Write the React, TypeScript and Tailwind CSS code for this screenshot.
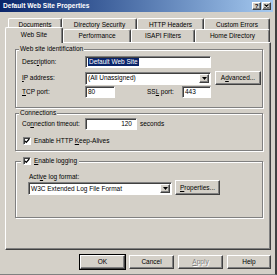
import React from "react";

const sunken =
  "bg-white border border-[#808080] border-r-white border-b-white shadow-[inset_1px_1px_0_#404040]";
const raised =
  "bg-[#d4d0c8] border border-white border-r-[#404040] border-b-[#404040] shadow-[inset_-1px_-1px_0_#808080]";
const etched = "border border-[#808080] shadow-[inset_1px_1px_0_#fff,1px_1px_0_#fff]";

function Check() {
  return (
    <div className={`w-[8px] h-[8px] flex items-center justify-center ${sunken}`}>
      <svg width="6" height="6" viewBox="0 0 6 6">
        <path d="M0.8 2.8 L2.3 4.4 L5.2 1" fill="none" stroke="#000" strokeWidth="1.2" />
      </svg>
    </div>
  );
}

function DropArrow() {
  return (
    <div className={`w-[10px] h-full flex items-center justify-center ${raised}`}>
      <svg width="5" height="3" viewBox="0 0 5 3">
        <path d="M0 0 H5 L2.5 3 Z" fill="#000" />
      </svg>
    </div>
  );
}

function Btn({ children, w, def, disabled }: { children: React.ReactNode; w: number; def?: boolean; disabled?: boolean }) {
  return (
    <div
      className={`h-[14px] flex items-center justify-center ${raised} ${def ? "outline outline-1 outline-black" : ""} ${
        disabled ? "text-[#808080] [text-shadow:1px_1px_0_#fff]" : ""
      }`}
      style={{ width: w }}
    >
      {children}
    </div>
  );
}

function Tab({ label, w, selected }: { label: string; w: number; selected?: boolean }) {
  return (
    <div
      className={`flex items-center justify-center rounded-t-[2px] border border-b-0 border-white border-r-[#404040] shadow-[inset_-1px_0_0_#808080] bg-[#d4d0c8] ${
        selected ? "h-[16px] -mb-[1px] relative z-10 pb-[2px]" : "h-[13px]"
      }`}
      style={{ width: w }}
    >
      {label}
    </div>
  );
}

export default function App() {
  return (
    <div className="w-[277px] h-[275px] bg-[#d4d0c8] text-black text-[6.5px] leading-[8px] font-['Liberation_Sans',Arial,sans-serif] border-r-2 border-r-[#404040] border-b border-b-[#808080] overflow-hidden flex flex-col">
      {/* title bar */}
      <div className="h-[12px] w-[273px] bg-gradient-to-r from-[#0a246a] to-[#a6caf0] flex items-center pl-[3px] pr-[2px]">
        <span className="text-white font-bold text-[6.6px]">Default Web Site Properties</span>
        <div className="ml-auto flex gap-[1px]">
          <div className={`w-[9px] h-[8px] flex items-center justify-center font-bold text-[6px] ${raised}`}>?</div>
          <div className={`w-[9px] h-[8px] flex items-center justify-center ${raised}`}>
            <svg width="5" height="4" viewBox="0 0 5 4">
              <path d="M0.5 0.5 L4.5 3.5 M4.5 0.5 L0.5 3.5" stroke="#000" strokeWidth="1.1" />
            </svg>
          </div>
        </div>
      </div>

      {/* tabs back row */}
      <div className="flex ml-[8px] mt-[6px] h-[11px]">
        <Tab label="Documents" w={54} />
        <Tab label="Directory Security" w={75} />
        <Tab label="HTTP Headers" w={67} />
        <Tab label="Custom Errors" w={66} />
      </div>
      {/* tabs front row */}
      <div className="flex items-end ml-[5px] -mt-[2px] h-[15px]">
        <Tab label="Web Site" w={58} selected />
        <Tab label="Performance" w={68} />
        <Tab label="ISAPI Filters" w={64} />
        <Tab label="Home Directory" w={75} />
      </div>

      {/* panel */}
      <div className="ml-[5px] w-[266px] h-[208px] border border-white border-r-[#404040] border-b-[#404040] shadow-[inset_-1px_-1px_0_#808080] flex flex-col">
        {/* group 1 */}
        <div className={`ml-[9px] w-[248px] mt-[6px] pb-[9px] ${etched}`}>
          <div className="-mt-[5px] ml-[3px] px-[1px] w-fit h-[8px] bg-[#d4d0c8]">Web site identification</div>
          <div className="flex items-center pl-[6px] mt-[3px] h-[12px]">
            <span className="w-[63px]">
              Desc<u>r</u>iption:
            </span>
            <div className={`w-[126px] h-full flex items-center pl-[2px] ${sunken}`}>
              <span className="bg-[#0a246a] text-white px-[1px]">Default Web Site</span>
            </div>
          </div>
          <div className="flex items-center pl-[6px] mt-[3px] h-[14px]">
            <span className="w-[63px]">
              <u>I</u>P address:
            </span>
            <div className={`w-[126px] h-[13px] flex items-center pl-[2px] pr-[1px] py-[1px] ${sunken}`}>
              <span>(All Unassigned)</span>
              <div className="ml-auto h-full">
                <DropArrow />
              </div>
            </div>
            <div className="ml-[4px]">
              <Btn w={46}>
                A<u>d</u>vanced...
              </Btn>
            </div>
          </div>
          <div className="flex items-center pl-[6px] mt-[1px] h-[12px]">
            <span className="w-[63px]">
              <u>T</u>CP port:
            </span>
            <div className={`w-[30px] h-full flex items-center pl-[2px] ${sunken}`}>80</div>
            <span className="ml-[32px] w-[35px]">
              SS<u>L</u> port:
            </span>
            <div className={`w-[29px] h-full flex items-center pl-[2px] ${sunken}`}>443</div>
          </div>
        </div>

        {/* group 2 */}
        <div className={`ml-[9px] w-[248px] mt-[5px] pb-[5px] ${etched}`}>
          <div className="-mt-[5px] ml-[3px] px-[1px] w-fit h-[8px] bg-[#d4d0c8]">Connections</div>
          <div className="flex items-center pl-[6px] mt-[1px] h-[12px]">
            <span className="w-[63px]">
              Co<u>n</u>nection timeout:
            </span>
            <div className={`w-[52px] h-full flex items-center justify-end pr-[4px] ${sunken}`}>120</div>
            <span className="ml-[3px]">seconds</span>
          </div>
          <div className="flex items-center pl-[7px] mt-[7px] h-[8px] gap-[3px]">
            <Check />
            <span>
              Enable HTTP <u>K</u>eep-Alives
            </span>
          </div>
        </div>

        {/* group 3 */}
        <div className={`ml-[9px] w-[248px] mt-[10px] pb-[22px] ${etched}`}>
          <div className="-mt-[5px] ml-[5px] px-[2px] w-fit h-[8px] bg-[#d4d0c8] flex items-center gap-[3px]">
            <Check />
            <span>
              <u>E</u>nable logging
            </span>
          </div>
          <div className="pl-[13px] mt-[8px] h-[8px]">
            Acti<u>v</u>e log format:
          </div>
          <div className="flex items-start pl-[12px] -mt-[1px] h-[15px]">
            <div className={`mt-[2px] w-[144px] h-[13px] flex items-center pl-[2px] pr-[1px] py-[1px] ${sunken}`}>
              <span>W3C Extended Log File Format</span>
              <div className="ml-auto h-full">
                <DropArrow />
              </div>
            </div>
            <div className="ml-[3px]">
              <div className={`w-[45px] h-[15px] flex items-center justify-center ${raised}`}>
                <u>P</u>roperties...
              </div>
            </div>
          </div>
        </div>
      </div>

      {/* bottom buttons */}
      <div className="flex ml-[80px] mt-[5px] gap-[4px]">
        <Btn w={45} def>
          OK
        </Btn>
        <Btn w={45}>Cancel</Btn>
        <Btn w={45} disabled>
          <u>A</u>pply
        </Btn>
        <Btn w={44}>Help</Btn>
      </div>
    </div>
  );
}
